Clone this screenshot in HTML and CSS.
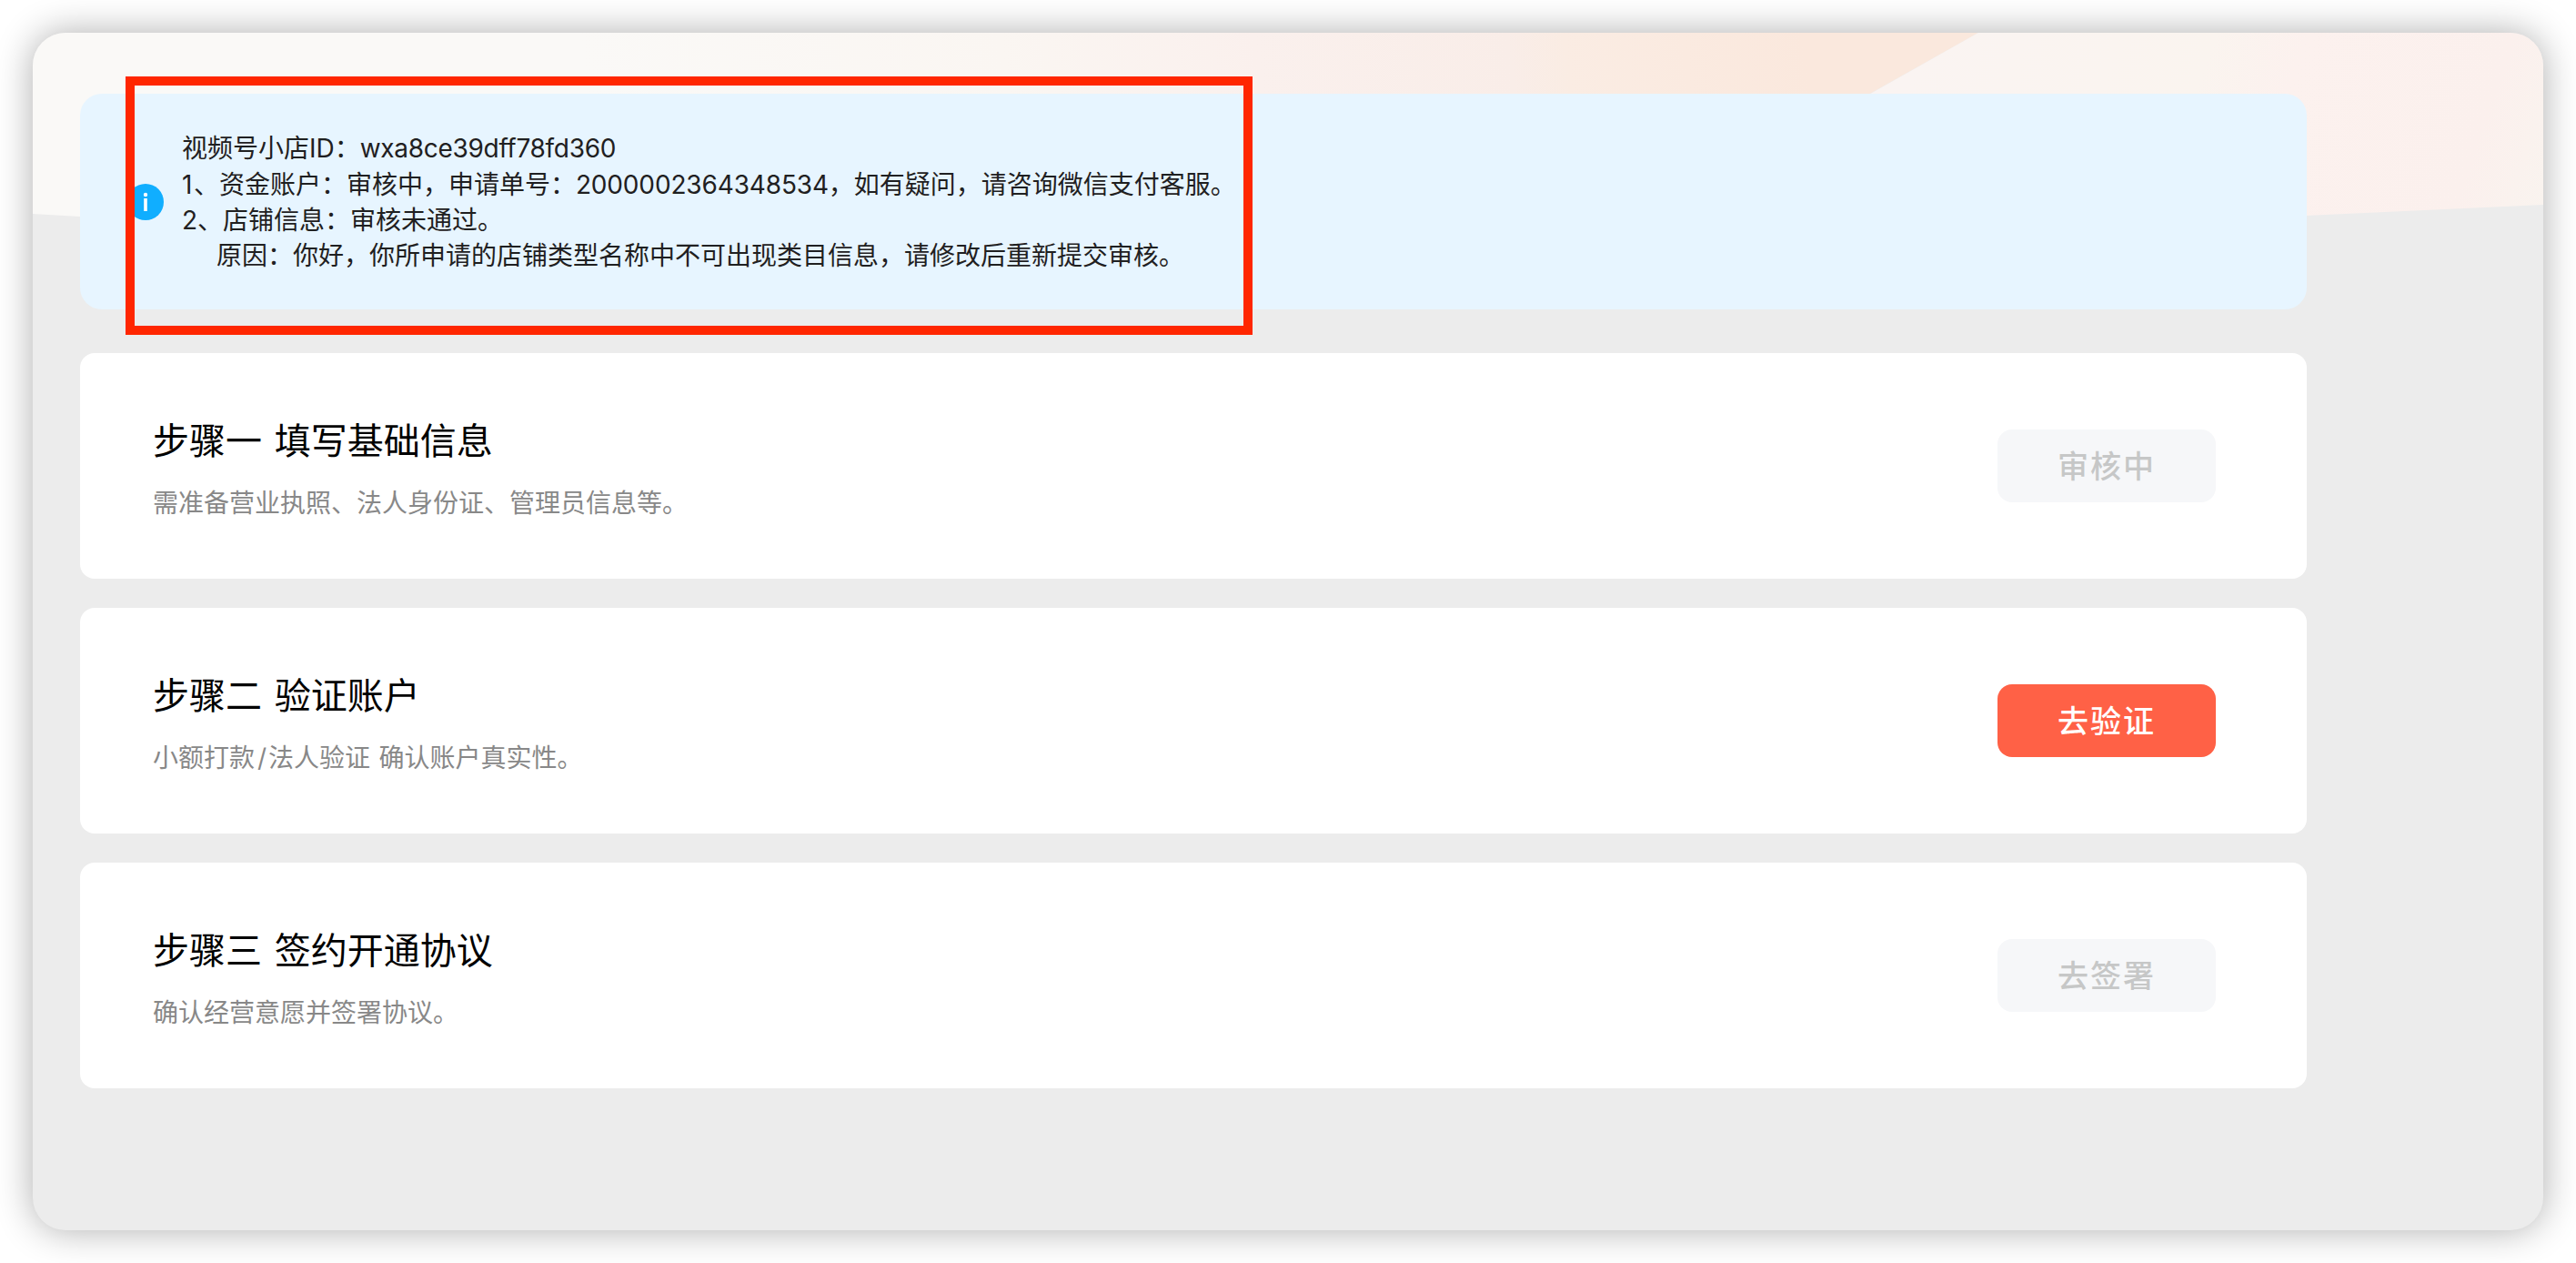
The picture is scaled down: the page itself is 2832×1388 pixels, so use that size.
FILE: index.html
```html
<!DOCTYPE html>
<html lang="zh-CN">
<head>
    <meta charset="UTF-8">
    <meta name="viewport" content="width=device-width, initial-scale=1.0">
    <title>视频号小店</title>
    <link rel="stylesheet" href="styles.css">
</head>
<body>
    <div class="window">
        <svg class="banner" viewBox="0 0 2760 202" preserveAspectRatio="none" aria-hidden="true">
            <defs>
                <linearGradient id="banner-left" gradientUnits="userSpaceOnUse" x1="600" y1="0" x2="2120" y2="-200">
                    <stop offset="0" stop-color="#faf9f7"/>
                    <stop offset="0.3" stop-color="#faf6f2"/>
                    <stop offset="0.48" stop-color="#faf0ed"/>
                    <stop offset="0.66" stop-color="#f9ede8"/>
                    <stop offset="0.7" stop-color="#faece3"/>
                    <stop offset="0.87" stop-color="#fae8dd"/>
                    <stop offset="1" stop-color="#fae8dd"/>
                </linearGradient>
                <linearGradient id="banner-right" gradientUnits="userSpaceOnUse" x1="2080" y1="0" x2="2760" y2="240">
                    <stop offset="0" stop-color="#faf4f2"/>
                    <stop offset="0.42" stop-color="#faf4ef"/>
                    <stop offset="0.55" stop-color="#fcf1ee"/>
                    <stop offset="0.85" stop-color="#fbf0ed"/>
                    <stop offset="1" stop-color="#f9f4ef"/>
                </linearGradient>
            </defs>
            <path d="M0 0H2139L1840 168L1700 202H52L0 199Z" fill="url(#banner-left)"/>
            <path d="M2139 0H2760V189L2500 201L1781 202Z" fill="url(#banner-right)"/>
        </svg>

        <div class="content">
            <div class="notice">
                <svg class="notice-icon" viewBox="0 0 40 40">
                    <circle cx="20" cy="20" r="20" fill="#10aeff"/>
                    <circle cx="20" cy="12" r="2.2" fill="#fff"/>
                    <rect x="18.2" y="16" width="3.6" height="14" fill="#fff"/>
                </svg>
                <div class="notice-text">
                    <p>视频号小店ID：<span class="shop-id">wxa8ce39dff78fd360</span></p>
                    <p><span class="index">1</span>、资金账户：审核中，申请单号：<span class="number">2000002364348534</span>，如有疑问，请咨询微信支付客服。</p>
                    <p>2、店铺信息：审核未通过。</p>
                    <p class="reason">原因：你好，你所申请的店铺类型名称中不可出现类目信息，请修改后重新提交审核。</p>
                </div>
                <div class="highlight"></div>
            </div>

            <div class="steps">
                <div class="card">
                    <div class="card-info">
                        <h2>步骤一 填写基础信息</h2>
                        <p>需准备营业执照、法人身份证、管理员信息等。</p>
                    </div>
                    <button class="btn" disabled>审核中</button>
                </div>
                <div class="card">
                    <div class="card-info">
                        <h2>步骤二 验证账户</h2>
                        <p>小额打款<span class="slash">/</span>法人验证 确认账户真实性。</p>
                    </div>
                    <button class="btn">去验证</button>
                </div>
                <div class="card">
                    <div class="card-info">
                        <h2>步骤三 签约开通协议</h2>
                        <p>确认经营意愿并签署协议。</p>
                    </div>
                    <button class="btn" disabled>去签署</button>
                </div>
            </div>
        </div>
    </div>
</body>
</html>
```
FILE: styles.css
```css
* {
    box-sizing: border-box;
}

body {
    margin: 0;
    padding: 36px;
    height: 100vh;
    background: #ffffff;
    font-family: Inter, "Noto Sans CJK SC", sans-serif;
    overflow: hidden;
}

h2,
p {
    margin: 0;
}

.window {
    position: relative;
    height: 1316px;
    background: #ececec;
    border-radius: 36px;
    box-shadow: 0 0 40px rgba(0, 0, 0, 0.32);
}

/* decorative background behind the notice */
.banner {
    position: absolute;
    top: 0;
    left: 0;
    width: 100%;
    height: 202px;
    border-radius: 36px 36px 0 0;
}

.content {
    position: relative;
    width: 2500px;
    padding: 67px 0 0 52px;
}

.notice {
    position: relative;
    display: flex;
    align-items: center;
    gap: 20px;
    height: 237px;
    padding: 40px 52px;
    background: #e7f5ff;
    border-radius: 24px;
}

.notice-icon {
    width: 40px;
    height: 40px;
    flex-shrink: 0;
}

.notice-text {
    padding-top: 3px;
    font-size: 28px;
    line-height: 39.3px;
    color: #1f2021;
    white-space: nowrap;
}

.shop-id {
    letter-spacing: -0.3px;
}

.index {
    letter-spacing: 1.5px;
}

.number {
    letter-spacing: -0.15px;
}

.reason {
    padding-left: 38px;
}

.highlight {
    position: absolute;
    top: -19px;
    left: 50px;
    width: 1239px;
    height: 284px;
    border: 10px solid #ff2600;
}

.steps {
    display: flex;
    flex-direction: column;
    gap: 32px;
    margin-top: 48px;
}

.card {
    display: flex;
    justify-content: space-between;
    align-items: center;
    height: 248px;
    padding: 0 100px 0 80px;
    background: #ffffff;
    border-radius: 16px;
}

.card-info {
    padding-top: 5px;
}

.card-info h2 {
    font-size: 40px;
    font-weight: 400;
    line-height: 56px;
    word-spacing: 2.5px;
    color: #000000;
}

.card-info p {
    margin-top: 20px;
    font-size: 28px;
    line-height: 40px;
    word-spacing: 1.5px;
    color: #888888;
}

.slash {
    padding: 0 2px 0 3px;
}

.btn {
    width: 240px;
    height: 80px;
    padding: 0 0 3px;
    border: none;
    border-radius: 16px;
    background: #ff6146;
    color: #ffffff;
    font-family: inherit;
    font-size: 34px;
    font-weight: 500;
    letter-spacing: 2px;
    cursor: pointer;
}

.btn:disabled {
    background: #f6f7f9;
    color: #c6c7c7;
    cursor: not-allowed;
}
```
